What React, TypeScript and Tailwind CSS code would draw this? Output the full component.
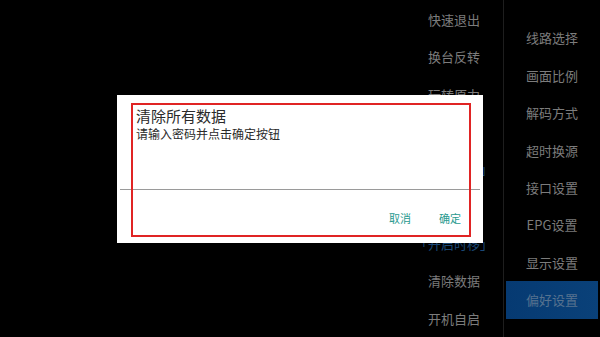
const middleItems = [
  { name: "快速退出" },
  { name: "换台反转" },
  { name: "玩转原力" },
  { name: "数据缓存" },
  { name: "「开启回看」", blue: true },
  { name: "播放设置" },
  { name: "「开启时移」", blue: true },
  { name: "清除数据" },
  { name: "开机自启" },
];

const rightItems = [
  "线路选择",
  "画面比例",
  "解码方式",
  "超时换源",
  "接口设置",
  "EPG设置",
  "显示设置",
  "偏好设置",
];

export default function App() {
  return (
    <div
      className="relative w-[600px] h-[337px] overflow-hidden bg-black flex"
      style={{ fontFamily: '"Noto Sans CJK SC", "Noto Sans", sans-serif' }}
    >
      <div className="w-[405px]" />

      {/* middle column */}
      <div className="w-[98px] flex flex-col pt-px">
        {middleItems.map((item) => (
          <div
            key={item.name}
            className={
              "h-[37.4px] flex items-center justify-center text-[13px] " +
              (item.blue ? "text-[#1a4877]" : "text-[#7c7c7c]")
            }
          >
            {item.name}
          </div>
        ))}
      </div>

      <div className="w-px bg-[#1e1e1e]" />

      {/* right column */}
      <div className="flex-1 flex flex-col pt-[19.5px] pl-[2px] pr-[2px]">
        {rightItems.map((name) => {
          const active = name === "偏好设置";
          return (
            <div
              key={name}
              className={
                "h-[37.4px] flex items-center justify-center text-[13px] " +
                (active
                  ? "bg-gradient-to-r from-[#063a72] to-[#0a4179] text-[#56728f]"
                  : "text-[#7c7c7c]")
              }
            >
              {name}
            </div>
          );
        })}
      </div>

      {/* dialog */}
      <div className="absolute left-[117px] top-[95px] w-[366px] h-[148px] bg-white flex flex-col">
        <div className="pl-[19px] pt-[12px] text-[15px] leading-[18px] text-[#2a2a2a]">
          清除所有数据
        </div>
        <div className="pl-[19px] pt-[1px] text-[12px] leading-[16px] text-[#2a2a2a]">
          请输入密码并点击确定按钮
        </div>
        <div className="mx-[3px] mt-[47px] h-px bg-[#9a9a9a]" />
        <div className="flex justify-end gap-[28px] pr-[22px] pt-[21px] text-[11px] leading-[14px] text-[#2a9a8f]">
          <span>取消</span>
          <span>确定</span>
        </div>
        <div className="absolute left-[14px] top-[8px] w-[340px] h-[134px] border-2 border-[#e02424]" />
      </div>
    </div>
  );
}
